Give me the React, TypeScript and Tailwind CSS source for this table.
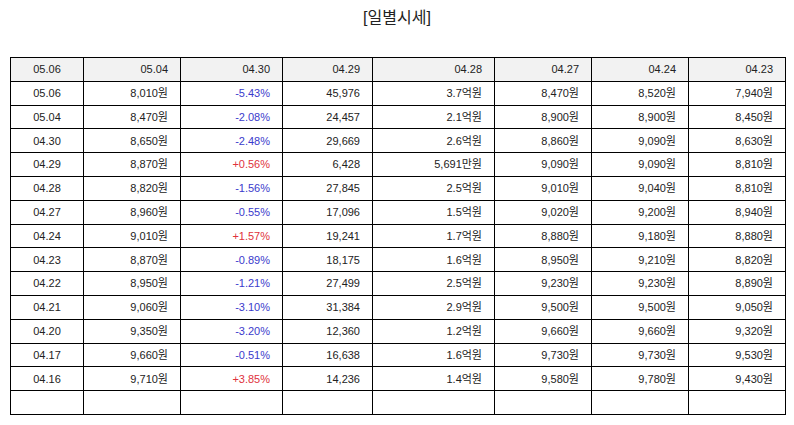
const header = ["05.06", "05.04", "04.30", "04.29", "04.28", "04.27", "04.24", "04.23"];

const rows: string[][] = [
  ["05.06", "8,010원", "-5.43%", "45,976", "3.7억원", "8,470원", "8,520원", "7,940원"],
  ["05.04", "8,470원", "-2.08%", "24,457", "2.1억원", "8,900원", "8,900원", "8,450원"],
  ["04.30", "8,650원", "-2.48%", "29,669", "2.6억원", "8,860원", "9,090원", "8,630원"],
  ["04.29", "8,870원", "+0.56%", "6,428", "5,691만원", "9,090원", "9,090원", "8,810원"],
  ["04.28", "8,820원", "-1.56%", "27,845", "2.5억원", "9,010원", "9,040원", "8,810원"],
  ["04.27", "8,960원", "-0.55%", "17,096", "1.5억원", "9,020원", "9,200원", "8,940원"],
  ["04.24", "9,010원", "+1.57%", "19,241", "1.7억원", "8,880원", "9,180원", "8,880원"],
  ["04.23", "8,870원", "-0.89%", "18,175", "1.6억원", "8,950원", "9,210원", "8,820원"],
  ["04.22", "8,950원", "-1.21%", "27,499", "2.5억원", "9,230원", "9,230원", "8,890원"],
  ["04.21", "9,060원", "-3.10%", "31,384", "2.9억원", "9,500원", "9,500원", "9,050원"],
  ["04.20", "9,350원", "-3.20%", "12,360", "1.2억원", "9,660원", "9,660원", "9,320원"],
  ["04.17", "9,660원", "-0.51%", "16,638", "1.6억원", "9,730원", "9,730원", "9,530원"],
  ["04.16", "9,710원", "+3.85%", "14,236", "1.4억원", "9,580원", "9,780원", "9,430원"],
];

const widths = ["w-[73px]", "w-[97px]", "w-[102px]", "w-[90px]", "w-[122px]", "w-[97px]", "w-[97px]", "w-[97px]"];

function cellColor(v: string) {
  if (v.startsWith("-") && v.endsWith("%")) return "text-[#3a3acc]";
  if (v.startsWith("+")) return "text-[#e0323c]";
  return "text-[#222]";
}

export default function App() {
  return (
    <div
      className="w-[794px] h-[425px] bg-white"
      style={{ fontFamily: '"Liberation Sans", "Noto Sans CJK KR", sans-serif' }}
    >
      <h1 className="pt-[6px] h-[57px] text-center text-[16px] text-[#222]">[일별시세]</h1>
      <table className="ml-[10px] w-[775px] table-fixed border-collapse text-[11px]">
        <colgroup>
          {widths.map((w, i) => (
            <col key={i} className={w} />
          ))}
        </colgroup>
        <thead>
          <tr className="h-[23.8px] bg-[#f2f2f2]">
            {header.map((h, i) => (
              <th
                key={i}
                className={`p-0 border-[1.5px] border-black font-normal text-[#222] ${i === 0 ? "text-center" : "text-right pr-[12px]"}`}
              >
                {h}
              </th>
            ))}
          </tr>
        </thead>
        <tbody>
          {rows.map((r, ri) => (
            <tr key={ri} className="h-[23.8px]">
              {r.map((v, i) => (
                <td
                  key={i}
                  className={`p-0 border-[1.5px] border-black ${cellColor(v)} ${i === 0 ? "text-center" : "text-right pr-[12px]"}`}
                >
                  {v}
                </td>
              ))}
            </tr>
          ))}
          <tr className="h-[23.8px]">
            {header.map((_, i) => (
              <td key={i} className="p-0 border-[1.5px] border-black" />
            ))}
          </tr>
        </tbody>
      </table>
    </div>
  );
}
